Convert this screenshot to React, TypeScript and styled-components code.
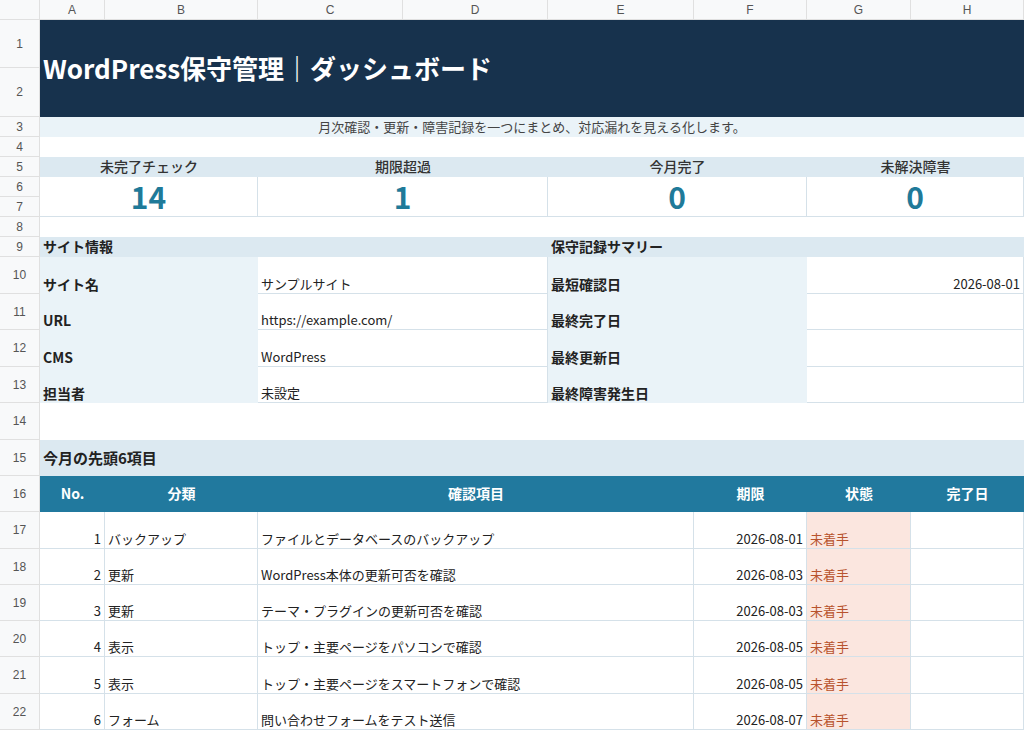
import { createGlobalStyle } from 'styled-components'
import styled from 'styled-components'

const GlobalStyle = createGlobalStyle`
	body {
		margin: 0;
		background: #ffffff;
		font-family: 'Noto Sans CJK JP', 'Noto Sans', sans-serif;
	}
`

const colWidths = [40, 65, 153, 145, 145, 146, 113, 104, 113]
const rowHeights = [20, 48, 49, 20, 20, 20, 20, 20, 20, 20, 37, 36, 37, 36, 37, 36, 36, 37, 36, 36, 36, 37, 36]

const Sheet = styled.div`
	display: grid;
	grid-template-columns: ${colWidths.map((w) => w + 'px').join(' ')};
	grid-template-rows: ${rowHeights.map((h) => h + 'px').join(' ')};
	width: 1024px;
	height: 730px;
	overflow: hidden;
	background: #ffffff;
`

const Header = styled.div<{ $r: number; $c: number }>`
	grid-row: ${(p) => p.$r};
	grid-column: ${(p) => p.$c};
	background: #f8f9fa;
	border-right: 1px solid #e0e0e0;
	border-bottom: 1px solid #e0e0e0;
	color: #555;
	font-family: 'Liberation Sans', sans-serif;
	font-size: 12px;
	display: flex;
	align-items: center;
	justify-content: center;
	box-sizing: border-box;
`

type CellProps = {
	$r: number
	$c: number
	$rs?: number
	$cs?: number
	$bg?: string
	$fg?: string
	$align?: 'left' | 'center' | 'right'
	$v?: 'center' | 'flex-end'
	$size?: number
	$weight?: number
	$line?: boolean
}

const Cell = styled.div<CellProps>`
	grid-row: ${(p) => p.$r} / span ${(p) => p.$rs ?? 1};
	grid-column: ${(p) => p.$c} / span ${(p) => p.$cs ?? 1};
	background: ${(p) => p.$bg ?? 'transparent'};
	color: ${(p) => p.$fg ?? '#222'};
	font-size: ${(p) => p.$size ?? 13}px;
	font-weight: ${(p) => p.$weight ?? 400};
	line-height: 1.2;
	display: flex;
	align-items: ${(p) => p.$v ?? 'flex-end'};
	justify-content: ${(p) =>
		p.$align === 'right' ? 'flex-end' : p.$align === 'center' ? 'center' : 'flex-start'};
	padding: 0 3px 1px 3px;
	box-sizing: border-box;
	white-space: nowrap;
	border-right: ${(p) => (p.$line ? '1px solid #d5e1e9' : 'none')};
	border-bottom: ${(p) => (p.$line ? '1px solid #d5e1e9' : 'none')};
`

const NAVY = '#17324d'
const PALE = '#dce9f1'
const PALER = '#eaf3f8'
const TEAL = '#21799e'
const NUM = '#1f7a99'

const kpis = [
	{ label: '未完了チェック', value: '14', c: 2 },
	{ label: '期限超過', value: '1', c: 4 },
	{ label: '今月完了', value: '0', c: 6 },
	{ label: '未解決障害', value: '0', c: 8 },
]

const siteInfo = [
	['サイト名', 'サンプルサイト', '最短確認日', '2026-08-01'],
	['URL', 'https://example.com/', '最終完了日', ''],
	['CMS', 'WordPress', '最終更新日', ''],
	['担当者', '未設定', '最終障害発生日', ''],
]

const tasks = [
	['1', 'バックアップ', 'ファイルとデータベースのバックアップ', '2026-08-01'],
	['2', '更新', 'WordPress本体の更新可否を確認', '2026-08-03'],
	['3', '更新', 'テーマ・プラグインの更新可否を確認', '2026-08-03'],
	['4', '表示', 'トップ・主要ページをパソコンで確認', '2026-08-05'],
	['5', '表示', 'トップ・主要ページをスマートフォンで確認', '2026-08-05'],
	['6', 'フォーム', '問い合わせフォームをテスト送信', '2026-08-07'],
]

const tableHead: [string, number, number][] = [
	['No.', 2, 1],
	['分類', 3, 1],
	['確認項目', 4, 3],
	['期限', 7, 1],
	['状態', 8, 1],
	['完了日', 9, 1],
]

export default function App() {
	return (
		<>
			<GlobalStyle />
			<Sheet>
				<Header $r={1} $c={1} />
				{['A', 'B', 'C', 'D', 'E', 'F', 'G', 'H'].map((l, i) => (
					<Header key={l} $r={1} $c={i + 2}>
						{l}
					</Header>
				))}
				{rowHeights.slice(1).map((_, i) => (
					<Header key={i} $r={i + 2} $c={1}>
						{i + 1}
					</Header>
				))}

				<Cell $r={2} $c={2} $rs={2} $cs={8} $bg={NAVY} $fg="#fff" $size={26} $weight={700} $v="center">
					WordPress保守管理｜ダッシュボード
				</Cell>
				<Cell $r={4} $c={2} $cs={8} $bg={PALER} $fg="#444" $align="center" $v="center">
					月次確認・更新・障害記録を一つにまとめ、対応漏れを見える化します。
				</Cell>

				{kpis.map((k) => (
					<Cell key={k.label} $r={6} $c={k.c} $cs={2} $bg={PALE} $fg="#333" $align="center" $v="center" $size={14} $weight={500}>
						{k.label}
					</Cell>
				))}
				{kpis.map((k) => (
					<Cell key={k.label + 'v'} $r={7} $c={k.c} $rs={2} $cs={2} $fg={NUM} $align="center" $v="center" $size={30} $weight={700} $line>
						{k.value}
					</Cell>
				))}

				<Cell $r={10} $c={2} $cs={4} $bg={PALE} $weight={700} $size={14} $v="center">
					サイト情報
				</Cell>
				<Cell $r={10} $c={6} $cs={4} $bg={PALE} $weight={700} $size={14} $v="center">
					保守記録サマリー
				</Cell>
				{siteInfo.map((row, i) => (
					<>
						<Cell key={'a' + i} $r={11 + i} $c={2} $cs={2} $bg={PALER} $weight={700} $size={14}>
							{row[0]}
						</Cell>
						<Cell key={'b' + i} $r={11 + i} $c={4} $cs={2} $line>
							{row[1]}
						</Cell>
						<Cell key={'c' + i} $r={11 + i} $c={6} $cs={2} $bg={PALER} $weight={700} $size={14}>
							{row[2]}
						</Cell>
						<Cell key={'d' + i} $r={11 + i} $c={8} $cs={2} $line $align="right">
							{row[3]}
						</Cell>
					</>
				))}

				<Cell $r={16} $c={2} $cs={8} $bg={PALE} $weight={700} $size={15} $v="center">
					今月の先頭6項目
				</Cell>
				{tableHead.map(([t, c, cs]) => (
					<Cell key={t} $r={17} $c={c} $cs={cs} $bg={TEAL} $fg="#fff" $weight={700} $size={14} $align="center" $v="center">
						{t}
					</Cell>
				))}
				{tasks.map((t, i) => (
					<>
						<Cell key={'n' + i} $r={18 + i} $c={2} $line $align="right">
							{t[0]}
						</Cell>
						<Cell key={'k' + i} $r={18 + i} $c={3} $line>
							{t[1]}
						</Cell>
						<Cell key={'t' + i} $r={18 + i} $c={4} $cs={3} $line>
							{t[2]}
						</Cell>
						<Cell key={'d' + i} $r={18 + i} $c={7} $line $align="right">
							{t[3]}
						</Cell>
						<Cell key={'s' + i} $r={18 + i} $c={8} $line $bg="#fbe6df" $fg="#b8532d">
							未着手
						</Cell>
						<Cell key={'f' + i} $r={18 + i} $c={9} $line />
					</>
				))}
			</Sheet>
		</>
	)
}
